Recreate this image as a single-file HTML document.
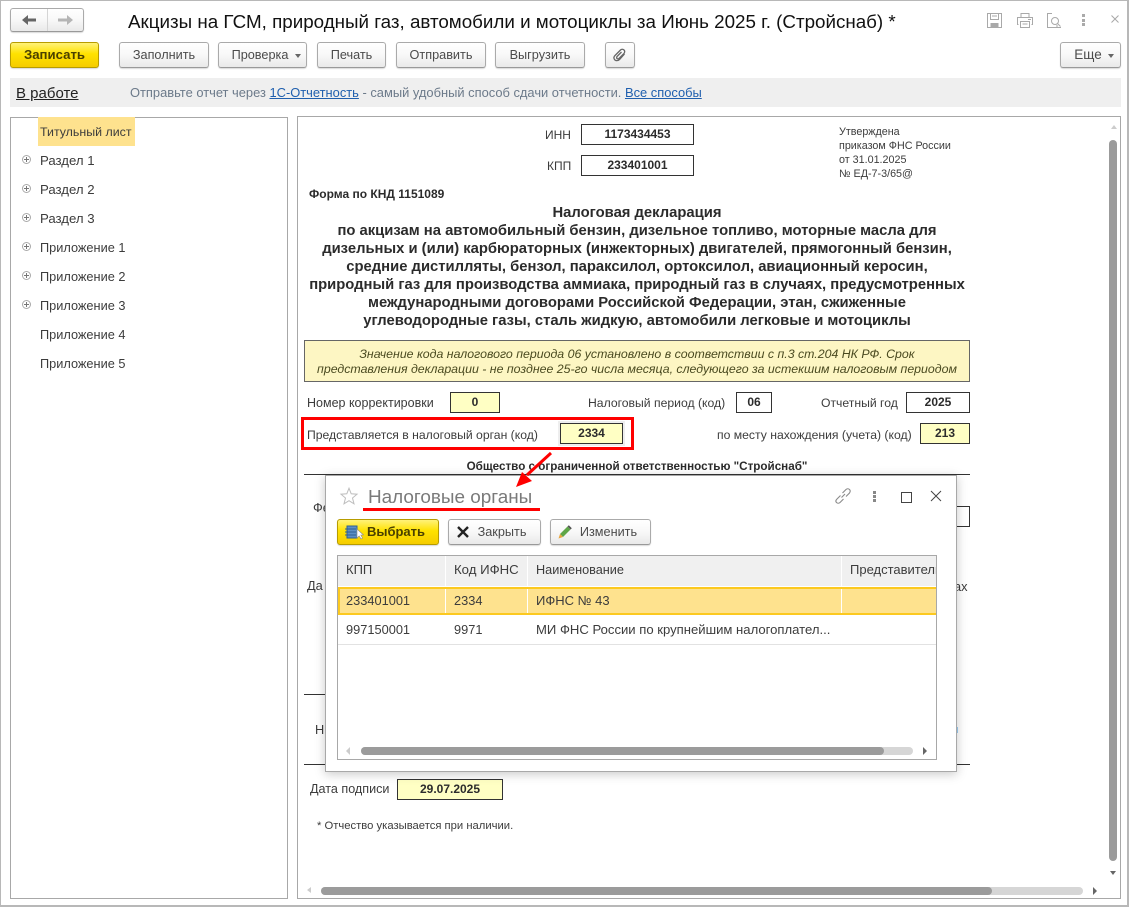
<!DOCTYPE html>
<html lang="ru"><head><meta charset="utf-8"><title>Акцизы</title>
<style>
html,body{margin:0;padding:0;background:#fff}
#p{position:relative;width:1130px;height:908px;overflow:hidden;background:#fff;font-family:"Liberation Sans","Noto Sans CJK SC",sans-serif;font-size:12px;color:#333}
#p>*,.a{position:absolute}
.t{position:absolute;white-space:nowrap;line-height:14px;color:#3c3c3c}
.c{text-align:center}
.b{position:absolute;box-sizing:border-box;border:1px solid #aaa;border-bottom-color:#999;border-radius:3px;background:linear-gradient(#fff,#f8f8f8 50%,#e9e9e9);box-shadow:0 1px 1px rgba(0,0,0,.15);color:#4b4b4b;text-align:center;font-size:12.7px;line-height:24px;white-space:nowrap}
.y{border-color:#b79c00;background:linear-gradient(#fff27a,#ffe200 45%,#f5cc00);color:#4a4000;font-weight:bold;font-size:13.2px}
.f{position:absolute;box-sizing:border-box;border:1px solid #333;text-align:center;font-weight:bold;font-size:12px;line-height:19px;color:#2c2c2c;background:#fff}
.fy{background:#ffffc4}
.panel{box-sizing:border-box;border:1px solid #a8a8a8;background:#fff}
.h{position:absolute;text-align:center;width:666px;left:304px;font-weight:bold;font-size:14.8px;line-height:18px;color:#2b2b2b;white-space:nowrap}
.tree{position:absolute;left:40px;color:#3c3c3c;line-height:14px;font-size:12.75px;white-space:nowrap}
.pl{position:absolute;left:22px;width:9px;height:9px;box-sizing:border-box;border:1px solid #aaa;border-radius:50%}
.pl:before{content:"";position:absolute;left:1px;top:3px;width:5px;height:1px;background:#777}
.pl:after{content:"";position:absolute;left:3px;top:1px;width:1px;height:5px;background:#777}
.ln{position:absolute;height:1px;background:#333}
.sb{position:absolute;background:#9b9b9b;border-radius:4px}
.tr{position:absolute;background:#d6d6d6;border-radius:4px}
.s{font-size:12.2px}
.m{font-size:12.8px}
</style></head><body>
<div id="p">
<div style="left:0;top:0;width:1129px;height:907px;box-sizing:border-box;border:1px solid #b8b8b8;border-width:1px 2px 2px 1px"></div>

<!-- nav -->
<div class="b" style="left:10px;top:8px;width:74px;height:24px"></div>
<div style="left:47px;top:9px;width:1px;height:22px;background:#d5d5d5"></div>
<svg style="left:21px;top:14px" width="60" height="12" viewBox="0 0 60 12"><path d="M1 6 L7 1 V4.500 H15 V7.500 H7 V11 Z" fill="#666"/><path d="M52 6 L46 1 V4.500 H37 V7.500 H46 V11 Z" fill="#b5b5b5"/></svg>
<div class="t" style="left:128px;top:11px;font-size:18.8px;line-height:22px;color:#111">Акцизы на ГСМ, природный газ, автомобили и мотоциклы за Июнь 2025 г. (Стройснаб) *</div>

<!-- top icons -->
<svg style="left:985px;top:11px" width="140" height="18" viewBox="0 0 140 18" fill="none" stroke="#a9a9a9" stroke-width="1">
<path d="M2.500 2.500H16.500V16.500H2.500Z"/><path d="M5.500 2.500V8.500H13.500V2.500M7 5H12"/><path d="M6 16V12.500H13V16" fill="#a9a9a9"/>
<path d="M36 6.500V2.500H44V6.500M33.500 13.500H32.500V6.500H47.500V13.500H46.500M35.500 10.500H44.500V16.500H35.500ZM37.500 13H42.500M43 8.500H46"/>
<path d="M67 2.500H62.500V16.500H76M72 14V16"/><circle cx="70" cy="10" r="3.500"/><path d="M72.500 12.500L75.500 15.500"/>
</svg>
<div style="left:1082px;top:14px;width:3px;height:3px;background:#aaa"></div><div style="left:1082px;top:19px;width:3px;height:3px;background:#aaa"></div><div style="left:1082px;top:23px;width:3px;height:3px;background:#aaa"></div>
<svg style="left:1110px;top:14px" width="10" height="10" viewBox="0 0 10 10"><path d="M1.500 1.500L8.500 8.500M8.500 1.500L1.500 8.500" stroke="#a9a9a9"/></svg>

<!-- toolbar -->
<div class="b y" style="left:10px;top:42px;width:89px;height:26px">Записать</div>
<div class="b" style="left:119px;top:42px;width:90px;height:26px">Заполнить</div>
<div class="b" style="left:218px;top:42px;width:89px;height:26px;padding-right:5px">Проверка</div>
<div style="left:295px;top:54px;border:3.500px solid transparent;border-top:4px solid #666;border-bottom:0"></div>
<div class="b" style="left:317px;top:42px;width:69px;height:26px">Печать</div>
<div class="b" style="left:396px;top:42px;width:90px;height:26px">Отправить</div>
<div class="b" style="left:495px;top:42px;width:90px;height:26px">Выгрузить</div>
<div class="b" style="left:605px;top:42px;width:30px;height:26px"></div>
<svg style="left:612px;top:47px" width="16" height="16" viewBox="0 0 16 16"><path d="M12.500 7L7.500 12.500C6 14 3.500 14 2.500 12.500C1.500 11 2 9.500 3 8.500L8.500 3C9.500 2 11 2 12 3C13 4 13 5 12 6.500L7 11.500C6.500 12 5.500 12 5 11.500C4.500 11 4.500 10.500 5 9.500L9.500 5" fill="none" stroke="#666" stroke-width="1.300"/></svg>
<div class="b" style="left:1060px;top:42px;width:61px;height:26px;padding-right:5px;font-size:13.5px">Еще</div>
<div style="left:1108px;top:54px;border:3.500px solid transparent;border-top:4px solid #666;border-bottom:0"></div>

<!-- status bar -->
<div style="left:10px;top:78px;width:1111px;height:29px;background:#efefef"></div>
<div class="t" style="left:16px;top:86px;font-size:15px;line-height:16px;color:#222;text-decoration:underline">В работе</div>
<div class="t" style="left:130px;top:85px;line-height:15px;font-size:12.9px;color:#6c7a8a">Отправьте отчет через <span style="color:#1f5fae;text-decoration:underline">1С-Отчетность</span> - самый удобный способ сдачи отчетности. <span style="color:#1f5fae;text-decoration:underline">Все способы</span></div>

<!-- tree -->
<div class="panel" style="left:10px;top:117px;width:278px;height:782px"></div>
<div style="left:38px;top:117px;width:97px;height:29px;background:#fee28e"></div>
<div class="tree" style="top:125px;font-size:12.4px">Титульный лист</div>
<div class="pl" style="top:155px"></div><div class="tree" style="top:154px;font-size:13.2px">Раздел 1</div>
<div class="pl" style="top:184px"></div><div class="tree" style="top:183px;font-size:13.2px">Раздел 2</div>
<div class="pl" style="top:213px"></div><div class="tree" style="top:212px;font-size:13.2px">Раздел 3</div>
<div class="pl" style="top:242px"></div><div class="tree" style="top:241px">Приложение 1</div>
<div class="pl" style="top:271px"></div><div class="tree" style="top:270px">Приложение 2</div>
<div class="pl" style="top:300px"></div><div class="tree" style="top:299px">Приложение 3</div>
<div class="tree" style="top:328px">Приложение 4</div>
<div class="tree" style="top:357px">Приложение 5</div>

<!-- form panel -->
<div class="panel" style="left:297px;top:116px;width:824px;height:783px"></div>
<div style="left:1111px;top:125px;border:3.500px solid transparent;border-bottom:4px solid #ccc;border-top:0"></div>
<div class="sb" style="left:1109px;top:140px;width:8px;height:721px"></div>
<div style="left:1110px;top:871px;border:3.500px solid transparent;border-top:4px solid #666;border-bottom:0"></div>
<div style="left:307px;top:887px;border:3.500px solid transparent;border-right:4px solid #ccc;border-left:0"></div>
<div class="tr" style="left:321px;top:887px;width:762px;height:8px"></div>
<div class="sb" style="left:321px;top:887px;width:671px;height:8px"></div>
<div style="left:1093px;top:887px;border:4px solid transparent;border-left:4px solid #666;border-right:0"></div>

<div class="t" style="left:545px;top:128px">ИНН</div>
<div class="f" style="left:581px;top:124px;width:113px;height:21px">1173434453</div>
<div class="t" style="left:547px;top:159px">КПП</div>
<div class="f" style="left:581px;top:155px;width:113px;height:21px">233401001</div>
<div class="t" style="left:839px;top:125px;font-size:10.75px">Утверждена</div>
<div class="t" style="left:839px;top:139px;font-size:10.75px">приказом ФНС России</div>
<div class="t" style="left:839px;top:153px;font-size:10.75px">от 31.01.2025</div>
<div class="t" style="left:839px;top:167px;font-size:10.75px">№ ЕД-7-3/65@</div>
<div class="t" style="left:309px;top:187px;font-weight:bold;color:#2b2b2b">Форма по КНД 1151089</div>
<div class="h" style="top:204px">Налоговая декларация</div>
<div class="h" style="top:222px">по акцизам на автомобильный бензин, дизельное топливо, моторные масла для</div>
<div class="h" style="top:240px">дизельных и (или) карбюраторных (инжекторных) двигателей, прямогонный бензин,</div>
<div class="h" style="top:258px">средние дистилляты, бензол, параксилол, ортоксилол, авиационный керосин,</div>
<div class="h" style="top:276px">природный газ для производства аммиака, природный газ в случаях, предусмотренных</div>
<div class="h" style="top:294px">международными договорами Российской Федерации, этан, сжиженные</div>
<div class="h" style="top:312px">углеводородные газы, сталь жидкую, автомобили легковые и мотоциклы</div>
<div style="left:304px;top:340px;width:666px;height:42px;box-sizing:border-box;border:1px solid #666;background:#fdf6c3;text-align:center;font-style:italic;font-size:12.35px;line-height:15px;padding-top:6px;color:#4a4a20;white-space:nowrap">Значение кода налогового периода 06 установлено в соответствии с п.3 ст.204 НК РФ. Срок<br>представления декларации - не позднее 25-го числа месяца, следующего за истекшим налоговым периодом</div>

<div class="t" style="left:307px;top:396px;font-size:12.5px">Номер корректировки</div>
<div class="f fy" style="left:450px;top:392px;width:50px;height:21px">0</div>
<div class="t s" style="left:588px;top:396px">Налоговый период (код)</div>
<div class="f" style="left:736px;top:392px;width:36px;height:21px">06</div>
<div class="t s" style="left:821px;top:396px">Отчетный год</div>
<div class="f" style="left:906px;top:392px;width:64px;height:21px">2025</div>

<div style="left:301px;top:417px;width:333px;height:33px;box-sizing:border-box;border:3px solid #f00"></div>
<div class="t s" style="left:307px;top:428px">Представляется в налоговый орган (код)</div>
<div style="left:558px;top:421px;width:67px;height:25px;background:#eee"></div>
<div class="f fy" style="left:560px;top:423px;width:63px;height:21px">2334</div>
<div class="t s" style="left:717px;top:428px">по месту нахождения (учета) (код)</div>
<div class="f fy" style="left:920px;top:423px;width:50px;height:21px">213</div>
<div class="t c" style="left:304px;width:666px;top:460px;font-weight:bold;font-size:11.66px;color:#2b2b2b">Общество с ограниченной ответственностью "Стройснаб"</div>
<div class="ln" style="left:304px;top:474px;width:666px"></div>
<div class="f" style="left:900px;top:506px;width:70px;height:21px"></div>
<div class="t" style="left:313px;top:501px;font-size:12.8px">Фе</div>
<div class="t" style="left:307px;top:579px;font-size:12.8px">Да</div>
<div class="t" style="left:954px;top:580px;font-size:12.8px">ах</div>
<div class="ln" style="left:304px;top:694px;width:30px"></div>
<div class="t" style="left:315px;top:723px;font-size:12.8px">Н</div>
<div style="left:956px;top:727px;width:2px;height:6px;background:#9fd0f5"></div>
<div class="ln" style="left:304px;top:764px;width:666px"></div>
<div class="t" style="left:310px;top:782px;font-size:12.6px">Дата подписи</div>
<div class="f fy" style="left:397px;top:779px;width:106px;height:21px">29.07.2025</div>
<div class="t" style="left:317px;top:819px;font-size:11.25px">* Отчество указывается при наличии.</div>

<!-- dialog -->
<div style="left:325px;top:475px;width:632px;height:297px;box-sizing:border-box;border:1px solid #a8a8a8;background:#fff;box-shadow:0 2px 10px rgba(0,0,0,.22)"></div>
<svg style="left:339px;top:486px" width="20" height="20" viewBox="0 0 20 20"><path d="M10 2.200L12.200 7.800L18 8.200L13.500 12L15 17.800L10 14.700L5 17.800L6.500 12L2 8.200L7.800 7.800Z" fill="none" stroke="#bdbdbd"/></svg>
<div class="t" style="left:368px;top:488px;font-size:18.9px;line-height:20px;color:#7a7a7a">Налоговые органы</div>
<div style="left:363px;top:508px;width:177px;height:3px;background:#f00"></div>
<svg style="left:833px;top:486px" width="20" height="20" viewBox="0 0 20 20" fill="none" stroke="#8a8a8a" stroke-width="1.100"><path d="M8.500 11.500L12 8M7.500 9.500L4 13C2.500 14.500 2.500 15.500 3.500 16.500C4.500 17.500 6 17.500 7 16.500L10.500 13M9.500 7L13 3.500C14 2.500 15.500 2.500 16.500 3.500C17.500 4.500 17.500 5.500 16.500 7L13 10.500"/></svg>
<div style="left:873px;top:491px;width:3px;height:3px;background:#888"></div><div style="left:873px;top:495px;width:3px;height:3px;background:#888"></div><div style="left:873px;top:499px;width:3px;height:3px;background:#888"></div>
<div style="left:901px;top:492px;width:9px;height:9px;border:1px solid #444"></div>
<svg style="left:930px;top:490px" width="12" height="12" viewBox="0 0 12 12"><path d="M1 1L11 11M11 1L1 11" stroke="#444"/></svg>

<div class="b y" style="left:337px;top:519px;width:102px;height:26px;padding-left:16px;font-size:13px">Выбрать</div>
<svg style="left:344px;top:524px" width="20" height="16" viewBox="0 0 20 16"><path d="M3 2H13V14H3Z" fill="#5d8fc4" stroke="#2f5f94"/><path d="M1 5H12M1 8H12M1 11H12" stroke="#2f5f94"/><path d="M13 5V14L15.200 12L17 15L18.500 14L16.800 11H19.500Z" fill="#fff" stroke="#888" stroke-width=".6"/></svg>
<div class="b" style="left:448px;top:519px;width:93px;height:26px;padding-left:15px">Закрыть</div>
<svg style="left:456px;top:525px" width="14" height="14" viewBox="0 0 14 14"><path d="M2 2L12 12M12 2L2 12" stroke="#222" stroke-width="2.400"/></svg>
<div class="b" style="left:550px;top:519px;width:101px;height:26px;padding-left:16px">Изменить</div>
<svg style="left:557px;top:524px" width="16" height="16" viewBox="0 0 16 16"><path d="M3 10L10.500 2.500L13.500 5.500L6 13Z" fill="#5fa648"/><path d="M10.500 2.500L11.800 1.200L14.800 4.200L13.500 5.500Z" fill="#555"/><path d="M3 10L6 13L1.500 14.500Z" fill="#e9a53c"/></svg>

<!-- table -->
<div style="left:337px;top:555px;width:600px;height:205px;box-sizing:border-box;border:1px solid #a8a8a8;background:#fff"></div>
<div style="left:338px;top:556px;width:598px;height:30px;background:#f0f0f0"></div>
<div style="left:445px;top:556px;width:1px;height:30px;background:#fff"></div>
<div style="left:527px;top:556px;width:1px;height:30px;background:#fff"></div>
<div style="left:841px;top:556px;width:1px;height:30px;background:#fff"></div>
<div class="t" style="left:346px;top:563px;font-size:13px">КПП</div>
<div class="t" style="left:454px;top:563px;font-size:13.2px">Код ИФНС</div>
<div class="t" style="left:536px;top:563px;font-size:12.7px">Наименование</div>
<div class="t" style="left:850px;top:563px;width:86px;overflow:hidden;font-size:13px">Представитель</div>
<div style="left:338px;top:587px;width:598px;height:28px;box-sizing:border-box;background:#fee28e;border:2px solid #fcc91f;border-right:0"></div>
<div style="left:445px;top:589px;width:1px;height:24px;background:#fff"></div>
<div style="left:527px;top:589px;width:1px;height:24px;background:#fff"></div>
<div style="left:841px;top:589px;width:1px;height:24px;background:#fff"></div>
<div class="t m" style="left:346px;top:594px">233401001</div>
<div class="t m" style="left:454px;top:594px">2334</div>
<div class="t" style="left:536px;top:594px;font-size:13px">ИФНС № 43</div>
<div class="t m" style="left:346px;top:623px">997150001</div>
<div class="t m" style="left:454px;top:623px">9971</div>
<div class="t" style="left:536px;top:623px;font-size:13.1px">МИ ФНС России по крупнейшим налогоплател...</div>
<div style="left:338px;top:644px;width:598px;height:1px;background:#e2e2e2"></div>
<div style="left:346px;top:747px;border:4px solid transparent;border-right:4px solid #ccc;border-left:0"></div>
<div class="tr" style="left:361px;top:747px;width:552px;height:8px"></div>
<div class="sb" style="left:361px;top:747px;width:523px;height:8px"></div>
<div style="left:923px;top:747px;border:4px solid transparent;border-left:4px solid #666;border-right:0"></div>

<!-- red arrow -->
<svg style="left:505px;top:445px" width="56" height="52" viewBox="0 0 56 52"><path d="M46 8L22 30" stroke="#f00" stroke-width="3"/><path d="M11 42L17 27L27 36Z" fill="#f00"/></svg>
</div>
</body></html>
